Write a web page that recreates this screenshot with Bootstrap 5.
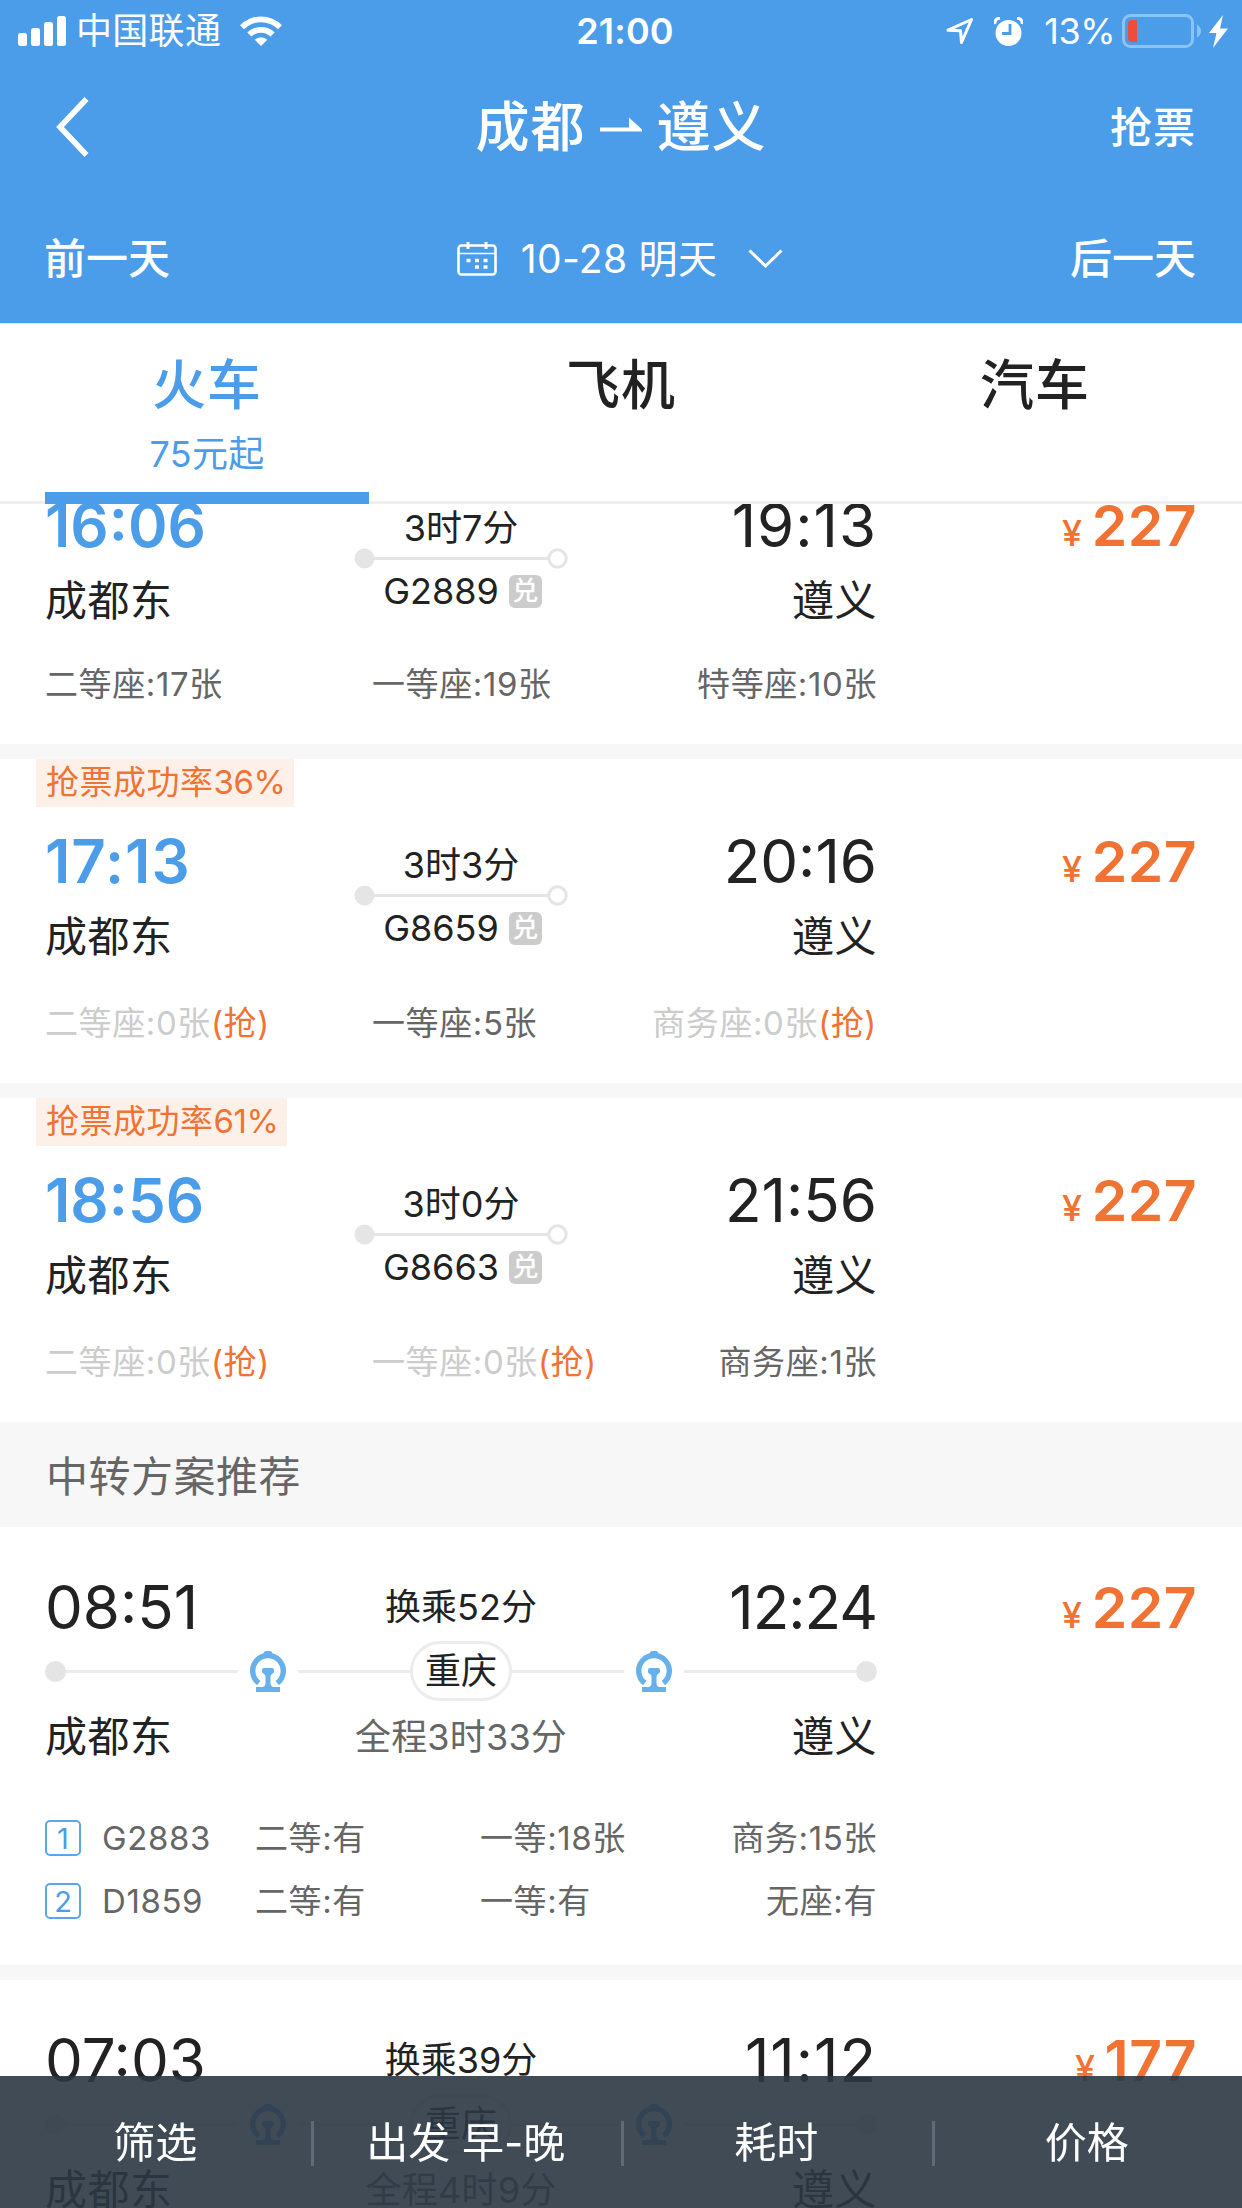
<!DOCTYPE html>
<html lang="zh-CN">
<head>
<meta charset="utf-8">
<meta name="viewport" content="width=device-width, initial-scale=1">
<title>成都 - 遵义</title>
<link href="https://cdn.jsdelivr.net/npm/bootstrap@5.3.0/dist/css/bootstrap.min.css" rel="stylesheet">
<style>
:root{--sky:#4b9ce9;--ink:#222;--flame:#f07333}
html,body{height:2208px;overflow:hidden}
body{width:1242px;background:#f7f7f7;color:var(--ink);font-family:Inter,"Noto Sans CJK SC",sans-serif;font-size:36px;line-height:1}
svg{display:block;flex:none}
.app-head{background:var(--sky);height:324px;border-bottom:1px solid #dbe7f3}
.status-bar{height:62px;padding:0 14px 0 18px}
.status-side{flex:1 1 0}
.carrier{margin:0 19px 0 10px;letter-spacing:.3px}
.clock{font-weight:600;letter-spacing:.2px;position:relative;left:2px}
.alarm-icon{margin:0 21px 0 20px}
.charge{margin-right:6px;letter-spacing:-.5px}
.title-bar{height:132px;padding:0 46px}
.back-icon{margin:-3px 0 0 10px}
.title-text{font-size:54px;font-weight:500;letter-spacing:1px}
.title-arrow{margin:0 14px}
.title-action{font-size:42px;font-weight:500;letter-spacing:1px}
.day-bar{height:129px;padding:0 46px 0 44px}
.day-link{font-size:42px;font-weight:500}
.day-now{font-size:39px;font-weight:400}
.day-text{margin:0 31px 0 24px;letter-spacing:.3px}
.mode-tabs{height:180px;border-bottom:3px solid #efefef}
.mode-tab{width:414px;padding-top:34px;position:relative}
.mode-name{font-size:54px;font-weight:500;letter-spacing:1px;line-height:56px}
.mode-price{font-size:36px;line-height:36px;margin-top:22px;letter-spacing:.3px}
.mode-mark{position:absolute;left:45px;bottom:-3px;width:324px;height:12px;background:var(--sky)}
.sky{color:var(--sky)}
.flame{color:var(--flame)}
.result-list{height:1704px;overflow:hidden}
.trip{height:324px;padding:72px 45px 0;margin-bottom:15px;background:#fff;position:relative;flex:none}
.trip-first{height:321px;margin-top:-81px}
.trip-first .mid{margin-top:15px}
.trip-first .seats{margin-top:46px}
.rate-tag{position:absolute;left:36px;top:0;height:48px;line-height:47px;padding:0 8px 0 10px;background:#fdf0e9;color:var(--flame);font-size:33px;letter-spacing:.5px}
.rate-num{letter-spacing:-.4px}
.trip-top{height:127px}
.trip-main{width:832px}
.side-col{flex:1 1 0}
.clock-big{font-size:60px;line-height:60px}
.clock-go{font-weight:600}
.t-wide{letter-spacing:1px}
.t-tight{letter-spacing:-1px}
.station{font-size:42px;line-height:42px;margin-top:25px;letter-spacing:.5px}
.mid{margin-top:16px;width:214px}
.mid-line{margin:2px 0 4px}
.train-no{height:36px;gap:10px;padding-left:3px}
.swap-tag{width:33px;height:33px;border-radius:6px;background:#ccc;color:#fff;font-size:26px;line-height:31px;font-weight:500;text-align:center}
.fare{font-size:57px;line-height:60px;height:60px;font-weight:600;margin-top:1px;letter-spacing:.5px}
.fare-sign{font-size:36px;font-weight:500;line-height:36px;margin-right:9px}
.seats{width:832px;margin-top:49px;font-size:33px;line-height:33px;color:#666;letter-spacing:.6px}
.seat-a{width:327px}
.gone{color:#ccc}
.group-head{height:105px;margin-top:-15px;padding:5px 46px 0;font-size:42px;color:#666;flex:none;letter-spacing:.5px}
.via{height:438px;padding:50px 45px 0;margin-bottom:15px;background:#fff;flex:none}
.via-top{height:60px}
.via-mid{padding-top:12px;font-size:36px;line-height:36px}
.via-line{height:60px;margin-top:4px}
.via-row{width:832px}
.via-bar{height:3px;background:#ececec}
.near{width:112px}
.rail-icon{margin:0 12px}
.via-dot{width:21px;height:21px;border-radius:50%;background:#e5e5e5}
.via-city{width:102px;height:60px;border:3px solid #ececec;border-radius:30px;line-height:54px;text-align:center}
.via-foot{margin-top:15px}
.via-foot .station{margin:0}
.via-total{color:#666;line-height:36px;margin-top:3px;letter-spacing:.2px}
.legs{margin-top:62px;gap:27px;font-size:33px;line-height:36px;color:#666;letter-spacing:.6px}
.leg{height:36px}
.leg-no{width:36px;height:36px;border:2px solid #5aa6ee;border-radius:5px;color:var(--sky);font-size:29px;line-height:33px;text-align:center;margin-right:21px;letter-spacing:0}
.leg-train{width:153px}
.leg-seat{width:225px}
.sort-bar{position:fixed;left:0;bottom:0;width:1242px;height:132px;padding-top:2px;background:rgba(43,55,68,.9);color:#fff;font-size:42px}
.sort-item{flex:1 1 0}
.sort-sep{width:3px;height:45px;background:#606b77;margin-right:-3px}
</style>
<script src="https://cdn.jsdelivr.net/npm/bootstrap@5.3.0/dist/js/bootstrap.bundle.min.js"></script>
</head>
<body class="m-0 text-nowrap">
<svg width="0" height="0" class="position-absolute">
  <symbol id="rail" viewBox="0 0 36 41"><path d="M8.7 32A15.3 15.3 0 1 1 27.3 32" fill="none" stroke="#66b0ec" stroke-width="5.4"/><path d="M14 3V1.500Q14 0 16 0H20Q22 0 22 1.500V3ZM14 17H22Q24 17 24 19V21Q24 22 22 23Q20.500 24 20.500 26V32Q20.500 36 24 36H30V41H6V36H12Q15.500 36 15.500 32V26Q15.500 24 14 23Q12 22 12 21V19Q12 17 14 17Z" fill="#66b0ec"/></symbol>
  <symbol id="ride" viewBox="0 0 214 21"><path d="M10 10.500H195" stroke="#e5e5e5" stroke-width="3"/><circle cx="10.500" cy="10.500" r="10" fill="#e5e5e5"/><circle cx="203.500" cy="10.500" r="8.700" fill="#fff" stroke="#e5e5e5" stroke-width="3"/></symbol>
</svg>

<header class="app-head text-white">
  <div class="status-bar d-flex align-items-center">
    <div class="status-side d-flex align-items-center">
      <svg width="48" height="30" viewBox="0 0 48 30" fill="#fff"><rect y="17" width="9" height="13" rx="2.500"/><rect x="13" y="12" width="9" height="18" rx="2.500"/><rect x="26" y="6" width="9" height="24" rx="2.500"/><rect x="39" width="9" height="30" rx="2.500"/></svg>
      <span class="carrier">中国联通</span>
      <svg width="42" height="30" viewBox="0 0 42 30" fill="#fff"><path d="M0 9.200A29.500 29.500 0 0 1 42 9.200L38 13.300A24 24 0 0 0 4 13.300ZM7.300 16.500A19.500 19.500 0 0 1 34.700 16.500L30.600 20.600A13.700 13.700 0 0 0 11.400 20.600ZM14.700 23.800A9 9 0 0 1 27.300 23.800L21 30Z"/></svg>
    </div>
    <span class="clock">21:00</span>
    <div class="status-side d-flex align-items-center justify-content-end">
      <svg width="28" height="28" viewBox="0 0 28 28" fill="none" stroke="#fff" stroke-width="3" stroke-linejoin="round"><path d="M2 13.200L25.500 2.500L15.500 25.500L14.500 13.800Z"/></svg>
      <svg class="alarm-icon" width="29" height="29" viewBox="0 0 29 29"><circle cx="14.500" cy="16" r="13" fill="#fff"/><path d="M1 7Q0 2 6 1M28 7Q29 2 23 1" fill="none" stroke="#fff" stroke-width="3"/><path d="M16 7V16.500H8" fill="none" stroke="#4b9ce9" stroke-width="2.800"/></svg>
      <span class="charge">13%</span>
      <svg width="107" height="36" viewBox="0 0 107 36"><rect x="2.500" y="2.500" width="69" height="31" rx="7" fill="none" stroke="#8bc3f4" stroke-width="3"/><path d="M76 11.500Q80 14 80 18T76 24.500Z" fill="#8bc3f4"/><path d="M16 7V29H11Q7 29 7 25V11Q7 7 11 7Z" fill="#ec4e3d"/><path d="M102 2L88 20H95.500L92 35L107 15.500H99Z" fill="#fff"/></svg>
    </div>
  </div>
  <div class="title-bar d-flex align-items-center">
    <div class="status-side"><svg class="back-icon" width="33" height="60" viewBox="0 0 33 60"><path d="M30.500 2L4 30L30.500 58" fill="none" stroke="#fff" stroke-width="5.600"/></svg></div>
    <div class="title-text d-flex align-items-center"><span>成都</span><svg class="title-arrow" width="43" height="54" viewBox="0 0 43 54"><path d="M0 26.500H29V16.500L42 28.500V30.500H0Z" fill="#fff"/></svg><span>遵义</span></div>
    <div class="status-side title-action text-end">抢票</div>
  </div>
  <div class="day-bar d-flex align-items-center">
    <div class="status-side day-link">前一天</div>
    <div class="day-now d-flex align-items-center">
      <svg width="40" height="34" viewBox="0 0 40 34"><rect x="1.500" y="3.500" width="37" height="29" rx="3" fill="none" stroke="#fff" stroke-width="2.600"/><path d="M2 11.500H38" stroke="#fff" stroke-width="1.600"/><path d="M11 0V7M29 0V7" stroke="#fff" stroke-width="3"/><path d="M9.500 18.500H13.500M18 18.500H22M26.500 18.500H30.500M18 25H22M26.500 25H30.500" stroke="#fff" stroke-width="3.600"/></svg>
      <span class="day-text">10-28 明天</span>
      <svg width="35" height="20" viewBox="0 0 35 20"><path d="M1.500 1.500L17.500 17L33.500 1.500" fill="none" stroke="#fff" stroke-width="3"/></svg>
    </div>
    <div class="status-side day-link text-end">后一天</div>
  </div>
</header>

<nav class="mode-tabs d-flex bg-white">
  <div class="mode-tab d-flex flex-column align-items-center sky"><span class="mode-name">火车</span><span class="mode-price">75元起</span><i class="mode-mark"></i></div>
  <div class="mode-tab d-flex flex-column align-items-center"><span class="mode-name">飞机</span></div>
  <div class="mode-tab d-flex flex-column align-items-center"><span class="mode-name">汽车</span></div>
</nav>

<main class="result-list d-flex flex-column">
  <article class="trip trip-first">
    <div class="trip-top d-flex justify-content-between">
      <div class="trip-main d-flex">
        <div class="side-col"><div class="clock-big clock-go sky">16:06</div><div class="station">成都东</div></div>
        <div class="mid d-flex flex-column align-items-center"><span>3时7分</span><svg class="mid-line" width="214" height="21"><use href="#ride"/></svg><div class="train-no d-flex align-items-center"><span>G2889</span><span class="swap-tag">兑</span></div></div>
        <div class="side-col text-end"><div class="clock-big t-wide">19:13</div><div class="station">遵义</div></div>
      </div>
      <div class="fare flame"><span class="fare-sign">¥</span>227</div>
    </div>
    <div class="seats d-flex"><span class="seat-a">二等座:17张</span><span>一等座:19张</span><span class="ms-auto">特等座:10张</span></div>
  </article>

  <article class="trip">
    <div class="rate-tag">抢票成功率<span class="rate-num">36%</span></div>
    <div class="trip-top d-flex justify-content-between">
      <div class="trip-main d-flex">
        <div class="side-col"><div class="clock-big clock-go t-wide sky">17:13</div><div class="station">成都东</div></div>
        <div class="mid d-flex flex-column align-items-center"><span>3时3分</span><svg class="mid-line" width="214" height="21"><use href="#ride"/></svg><div class="train-no d-flex align-items-center"><span>G8659</span><span class="swap-tag">兑</span></div></div>
        <div class="side-col text-end"><div class="clock-big">20:16</div><div class="station">遵义</div></div>
      </div>
      <div class="fare flame"><span class="fare-sign">¥</span>227</div>
    </div>
    <div class="seats d-flex"><span class="seat-a gone">二等座:0张<span class="flame">(抢)</span></span><span>一等座:5张</span><span class="ms-auto gone">商务座:0张<span class="flame">(抢)</span></span></div>
  </article>

  <article class="trip">
    <div class="rate-tag">抢票成功率<span class="rate-num">61%</span></div>
    <div class="trip-top d-flex justify-content-between">
      <div class="trip-main d-flex">
        <div class="side-col"><div class="clock-big clock-go sky">18:56</div><div class="station">成都东</div></div>
        <div class="mid d-flex flex-column align-items-center"><span>3时0分</span><svg class="mid-line" width="214" height="21"><use href="#ride"/></svg><div class="train-no d-flex align-items-center"><span>G8663</span><span class="swap-tag">兑</span></div></div>
        <div class="side-col text-end"><div class="clock-big">21:56</div><div class="station">遵义</div></div>
      </div>
      <div class="fare flame"><span class="fare-sign">¥</span>227</div>
    </div>
    <div class="seats d-flex"><span class="seat-a gone">二等座:0张<span class="flame">(抢)</span></span><span class="gone">一等座:0张<span class="flame">(抢)</span></span><span class="ms-auto">商务座:1张</span></div>
  </article>

  <div class="group-head d-flex align-items-center">中转方案推荐</div>

  <article class="via">
    <div class="via-top d-flex justify-content-between">
      <div class="trip-main d-flex">
        <div class="side-col clock-big">08:51</div><div class="via-mid">换乘52分</div><div class="side-col clock-big t-tight text-end">12:24</div>
      </div>
      <div class="fare flame"><span class="fare-sign">¥</span>227</div>
    </div>
    <div class="via-row via-line d-flex align-items-center"><i class="via-dot"></i><i class="via-bar flex-fill"></i><svg class="rail-icon" width="36" height="41"><use href="#rail"/></svg><i class="via-bar near"></i><span class="via-city">重庆</span><i class="via-bar near"></i><svg class="rail-icon" width="36" height="41"><use href="#rail"/></svg><i class="via-bar flex-fill"></i><i class="via-dot"></i></div>
    <div class="via-row via-foot d-flex"><div class="side-col station">成都东</div><div class="via-total">全程3时33分</div><div class="side-col station text-end">遵义</div></div>
    <div class="via-row legs d-flex flex-column">
      <div class="leg d-flex"><span class="leg-no">1</span><span class="leg-train">G2883</span><span class="leg-seat">二等:有</span><span>一等:18张</span><span class="ms-auto">商务:15张</span></div>
      <div class="leg d-flex"><span class="leg-no">2</span><span class="leg-train">D1859</span><span class="leg-seat">二等:有</span><span>一等:有</span><span class="ms-auto">无座:有</span></div>
    </div>
  </article>

  <article class="via">
    <div class="via-top d-flex justify-content-between">
      <div class="trip-main d-flex">
        <div class="side-col clock-big">07:03</div><div class="via-mid">换乘39分</div><div class="side-col clock-big t-wide text-end">11:12</div>
      </div>
      <div class="fare flame t-wide"><span class="fare-sign">¥</span>177</div>
    </div>
    <div class="via-row via-line d-flex align-items-center"><i class="via-dot"></i><i class="via-bar flex-fill"></i><svg class="rail-icon" width="36" height="41"><use href="#rail"/></svg><i class="via-bar near"></i><span class="via-city">重庆</span><i class="via-bar near"></i><svg class="rail-icon" width="36" height="41"><use href="#rail"/></svg><i class="via-bar flex-fill"></i><i class="via-dot"></i></div>
    <div class="via-row via-foot d-flex"><div class="side-col station">成都东</div><div class="via-total">全程4时9分</div><div class="side-col station text-end">遵义</div></div>
  </article>
</main>

<footer class="sort-bar d-flex align-items-center">
  <div class="sort-item text-center">筛选</div><i class="sort-sep"></i>
  <div class="sort-item text-center">出发 早-晚</div><i class="sort-sep"></i>
  <div class="sort-item text-center">耗时</div><i class="sort-sep"></i>
  <div class="sort-item text-center">价格</div>
</footer>
</body>
</html>
